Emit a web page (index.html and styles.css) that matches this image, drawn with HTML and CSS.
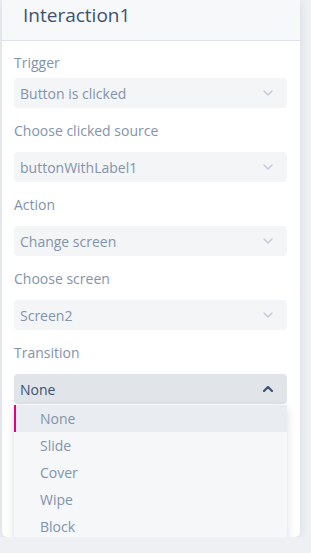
FILE: index.html
```html
<!DOCTYPE html>
<html lang="en">
<head>
  <meta charset="UTF-8" />
  <title>Interaction1</title>
  <meta name="viewport" content="width=device-width, initial-scale=1" />
  <link rel="stylesheet" href="styles.css">
</head>
<body>

  <div class="panel">
    <div class="panel-header">
      <h1>Interaction1</h1>
    </div>

    <div class="panel-body">
      <div class="field first">
        <label>Trigger</label>
        <div class="select">
          <span>Button is clicked</span>
          <svg class="chevron" width="10" height="6" viewBox="0 0 10 6"><path d="M1 1l4 4 4-4" /></svg>
        </div>
      </div>

      <div class="field">
        <label>Choose clicked source</label>
        <div class="select">
          <span>buttonWithLabel1</span>
          <svg class="chevron" width="10" height="6" viewBox="0 0 10 6"><path d="M1 1l4 4 4-4" /></svg>
        </div>
      </div>

      <div class="field">
        <label>Action</label>
        <div class="select">
          <span>Change screen</span>
          <svg class="chevron" width="10" height="6" viewBox="0 0 10 6"><path d="M1 1l4 4 4-4" /></svg>
        </div>
      </div>

      <div class="field">
        <label>Choose screen</label>
        <div class="select">
          <span>Screen2</span>
          <svg class="chevron" width="10" height="6" viewBox="0 0 10 6"><path d="M1 1l4 4 4-4" /></svg>
        </div>
      </div>

      <div class="field">
        <label>Transition</label>
        <div class="select-wrap">
          <div class="select open">
            <span>None</span>
            <svg class="chevron" width="10" height="6" viewBox="0 0 10 6"><path d="M1 5l4-4 4 4" /></svg>
          </div>
          <ul class="menu">
            <li class="active">None</li>
            <li>Slide</li>
            <li>Cover</li>
            <li>Wipe</li>
            <li>Block</li>
          </ul>
        </div>
      </div>
    </div>
  </div>

</body>
</html>
```

FILE: styles.css
```css
* {
  box-sizing: border-box;
}
body {
  font-family: 'Open Sans', 'Noto Sans', sans-serif;
  margin: 0;
  background: #eef0f3;
}
.panel {
  width: 298px;
  height: 537px;
  margin-left: 2px;
  background: #fff;
  border-radius: 0 0 5px 5px;
  box-shadow: 0 2px 10px rgba(40, 55, 80, 0.12);
}
.panel-header {
  height: 41px;
  padding: 2px 0 0 21px;
  background: #f7f8fa;
  border-bottom: 1px solid #dfe3e8;
}
h1 {
  margin: 0;
  font-size: 19px;
  font-weight: 500;
  color: #3e5170;
}
.panel-body {
  padding: 12px 13px 0 12px;
}
.field {
  margin-bottom: 13px;
}
label {
  display: block;
  font-size: 14px;
  line-height: 20px;
  margin-bottom: 11px;
  color: #8393aa;
}
.field.first label {
  margin-bottom: 5px;
}
.select {
  height: 30px;
  display: flex;
  align-items: center;
  justify-content: space-between;
  padding: 0 14px 0 6px;
  border-radius: 4px;
  background: #f4f5f7;
  font-size: 14px;
  color: #8393aa;
}
.chevron {
  fill: none;
  stroke: #c6ccd5;
  stroke-width: 1.6;
  stroke-linecap: round;
  stroke-linejoin: round;
}
.select-wrap {
  position: relative;
}
.select.open {
  background: #e1e5ea;
  color: #3e5170;
}
.select.open .chevron {
  stroke: #3e5170;
  stroke-width: 2.2;
}
.menu {
  position: absolute;
  top: 31px;
  left: 0;
  right: 0;
  margin: 0;
  padding: 0;
  list-style: none;
  background: #f5f7f9;
  box-shadow: 0 3px 8px rgba(40, 55, 80, 0.18);
}
.menu li {
  height: 27px;
  line-height: 27px;
  padding-left: 26px;
  font-size: 14px;
  color: #8393aa;
}
.menu li.active {
  background: #e9edf1;
  border-left: 2px solid #e5007d;
  padding-left: 24px;
}
```
